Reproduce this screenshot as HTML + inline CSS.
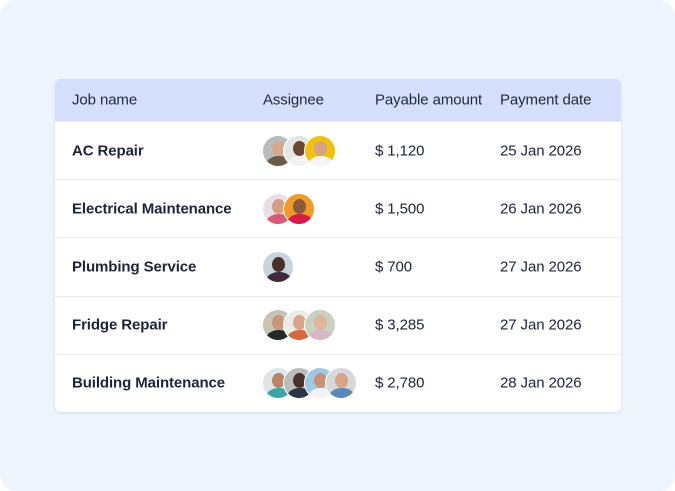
<!DOCTYPE html>
<html><head><meta charset="utf-8"><style>
*{margin:0;padding:0;box-sizing:border-box}
html,body{width:675px;height:491px;overflow:hidden;background:#fff}
.bg{position:absolute;left:0;top:0;width:675px;height:491px;background:#eef5fd;border-radius:16px}
.card{position:absolute;left:55px;top:79px;width:566px;height:333px;background:#fff;border-radius:6px;overflow:hidden;box-shadow:0 1px 3px rgba(30,50,120,.12);font-family:"Liberation Sans",sans-serif;color:#1d2436}
.hd{height:42px;background:#d5dffb;position:relative;font-size:15px;color:#222a40;letter-spacing:-0.1px}
.row{height:58.2px;position:relative;border-top:1px solid #e8ebf0;font-size:15px;letter-spacing:-0.1px}
.row:first-of-type{border-top:none}
.c{position:absolute;top:50%;transform:translateY(-50%);white-space:nowrap}
.c1{left:17px}.c2{left:208px}.c3{left:320px}.c4{left:445px}
.b{font-weight:bold}
.av{position:absolute;top:50%;margin-top:-16px;width:32px;height:32px;border-radius:50%;border:1.5px solid #fff;overflow:hidden}
.av i{position:absolute;left:9px;top:5px;width:13px;height:15px;border-radius:50%}
.av b{position:absolute;left:3px;top:20px;width:26px;height:18px;border-radius:50%}
</style></head><body>
<div class="bg"></div>
<div class="card">
<div class="hd"><span class="c c1">Job name</span><span class="c c2">Assignee</span><span class="c c3">Payable amount</span><span class="c c4">Payment date</span></div>
<div class="row"><span class="c c1 b">AC Repair</span>
<div class="av" style="left:207px;background:#b8bcbc"><i style="background:#d9a88c"></i><b style="background:#6a5a48"></b></div>
<div class="av" style="left:228px;background:#e4e6e4"><i style="background:#6b4632"></i><b style="background:#f3f3f3"></b></div>
<div class="av" style="left:249px;background:#f0c20e"><i style="background:#d8a281"></i><b style="background:#f5f5f5"></b></div>
<span class="c c3">$ 1,120</span><span class="c c4">25 Jan 2026</span></div>
<div class="row"><span class="c c1 b">Electrical Maintenance</span>
<div class="av" style="left:207px;background:#e9dfe6"><i style="background:#d49d84"></i><b style="background:#d65a7a"></b></div>
<div class="av" style="left:228px;background:#f29a28"><i style="background:#8a5a3c"></i><b style="background:#d81b4a"></b></div>
<span class="c c3">$ 1,500</span><span class="c c4">26 Jan 2026</span></div>
<div class="row"><span class="c c1 b">Plumbing Service</span>
<div class="av" style="left:207px;background:#c8d4dc"><i style="background:#4a3028"></i><b style="background:#3e2a3a"></b></div>
<span class="c c3">$ 700</span><span class="c c4">27 Jan 2026</span></div>
<div class="row"><span class="c c1 b">Fridge Repair</span>
<div class="av" style="left:207px;background:#c9c3b4"><i style="background:#c99478"></i><b style="background:#242a2c"></b></div>
<div class="av" style="left:228px;background:#ecebe8"><i style="background:#d9a488"></i><b style="background:#d6683e"></b></div>
<div class="av" style="left:249px;background:#c9d2c0"><i style="background:#e0b498"></i><b style="background:#d8b8c4"></b></div>
<span class="c c3">$ 3,285</span><span class="c c4">27 Jan 2026</span></div>
<div class="row"><span class="c c1 b">Building Maintenance</span>
<div class="av" style="left:207px;background:#dfe4e6"><i style="background:#b88468"></i><b style="background:#3aa7a6"></b></div>
<div class="av" style="left:228px;background:#bcbcbc"><i style="background:#4a3228"></i><b style="background:#2e3444"></b></div>
<div class="av" style="left:249px;background:#9fc8e4"><i style="background:#c49474"></i><b style="background:#f2f2f2"></b></div>
<div class="av" style="left:270px;background:#d6d8da"><i style="background:#d8a488"></i><b style="background:#5c88b8"></b></div>
<span class="c c3">$ 2,780</span><span class="c c4">28 Jan 2026</span></div>
</div>
</body></html>
